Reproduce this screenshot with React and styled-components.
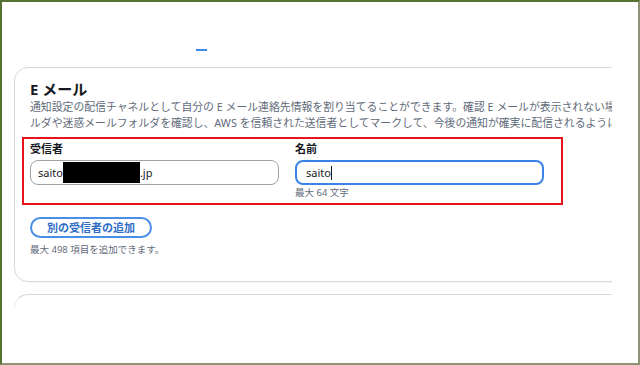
import React from "react";
import styled, { createGlobalStyle } from "styled-components";

const Global = createGlobalStyle`
  html, body { margin: 0; padding: 0; background: #fff; }
  body { font-family: "Noto Sans", "Noto Sans CJK JP", sans-serif; color: #16191f; }
  * { box-sizing: border-box; }
`;

const Frame = styled.div`
  width: 640px;
  height: 365px;
  border-style: solid;
  border-width: 2px;
  border-color: #567232 #8c9274 #8c9274 #567232;
  background: #fff;
  overflow: hidden;
`;

const Viewport = styled.div`
  width: 610px;
  height: 100%;
  overflow: hidden;
  padding-left: 12px;
`;

const TabBar = styled.div`
  height: 49px;
  padding-left: 182px;
  padding-top: 47px;
`;

const TabIndicator = styled.div`
  width: 11px;
  height: 2px;
  background: #3f88ee;
`;

const Card = styled.section`
  width: 820px;
  margin-top: 16px;
  border: 1px solid #d9d9d9;
  border-radius: 14px;
  padding: 11px 16px 25px 15px;
  box-shadow: 0 1px 1px rgba(0, 0, 0, 0.04);
`;

const NextCard = styled.section`
  width: 820px;
  height: 14px;
  margin-top: 12px;
  border: 1px solid #d9d9d9;
  border-bottom: none;
  border-left-color: #ececec;
  border-radius: 14px 14px 0 0;
`;

const Title = styled.h2`
  margin: 0;
  font-size: 15px;
  line-height: 20px;
  font-weight: 700;
  color: #16191f;
`;

const Desc = styled.p`
  margin: 0;
  font-size: 10.85px;
  line-height: 16px;
  color: #5f6b7a;
  white-space: nowrap;
`;

const FieldRow = styled.div`
  position: relative;
  display: flex;
  gap: 16px;
  margin-top: 11px;
`;

const Annotation = styled.div`
  position: absolute;
  left: -8px;
  top: -5px;
  width: 541px;
  height: 68px;
  border: 2px solid #e8141c;
  pointer-events: none;
`;

const Field = styled.div`
  width: 249px;
  display: flex;
  flex-direction: column;
`;

const Label = styled.div`
  font-size: 11px;
  line-height: 14px;
  font-weight: 700;
  color: #16191f;
  margin-bottom: 4px;
`;

const InputBox = styled.div`
  height: 25px;
  border-radius: 8px;
  border: ${(p) => (p.$focused ? "2px solid #3a82e6" : "1.5px solid #9ea3a8")};
  padding-left: ${(p) => (p.$focused ? "9px" : "7px")};
  display: flex;
  align-items: center;
  font-size: 11px;
  color: #16191f;
  background: #fff;
`;

const Redaction = styled.span`
  display: inline-block;
  width: 77px;
  height: 21px;
  background: #000;
`;

const Caret = styled.span`
  display: inline-block;
  width: 1px;
  height: 14px;
  background: #16191f;
  margin-left: 0.5px;
`;

const Hint = styled.div`
  font-size: 9.5px;
  line-height: 12px;
  color: #5f6b7a;
  margin-top: ${(p) => p.$mt || 0}px;
`;

const AddButton = styled.button`
  margin-top: 18px;
  height: 21px;
  width: 122px;
  border: 2px solid #4a8ee6;
  border-radius: 11px;
  background: #fff;
  color: #2f6dc7;
  font-family: inherit;
  font-size: 11px;
  font-weight: 700;
  line-height: 1;
  padding: 0;
  display: flex;
  align-items: center;
  justify-content: center;
`;

export default function App() {
  return (
    <>
      <Global />
      <Frame>
        <Viewport>
          <TabBar>
            <TabIndicator />
          </TabBar>
          <Card>
            <Title>E メール</Title>
            <Desc>
              通知設定の配信チャネルとして自分の E メール連絡先情報を割り当てることができます。確認 E メールが表示されない場合は、受信トレイのフォ
            </Desc>
            <Desc>
              ルダや迷惑メールフォルダを確認し、AWS を信頼された送信者としてマークして、今後の通知が確実に配信されるようにしてください。
            </Desc>
            <FieldRow>
              <Field>
                <Label>受信者</Label>
                <InputBox>
                  saito<Redaction />.jp
                </InputBox>
              </Field>
              <Field>
                <Label>名前</Label>
                <InputBox $focused>
                  saito<Caret />
                </InputBox>
                <Hint $mt={2}>最大 64 文字</Hint>
              </Field>
              <Annotation />
            </FieldRow>
            <AddButton>別の受信者の追加</AddButton>
            <Hint $mt={6}>最大 498 項目を追加できます。</Hint>
          </Card>
          <NextCard />
        </Viewport>
      </Frame>
    </>
  );
}
